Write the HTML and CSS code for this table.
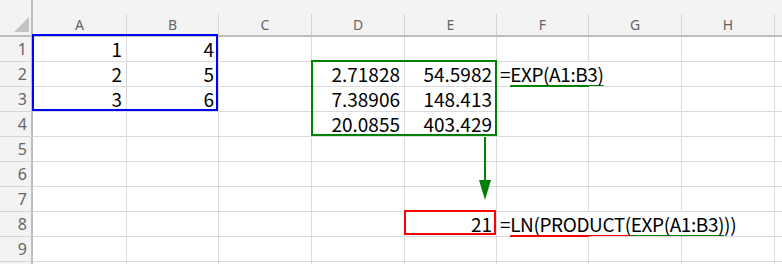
FILE: index.html
```html
<!DOCTYPE html>
<html lang="ja">
<head>
    <meta charset="UTF-8">
    <meta name="viewport" content="width=device-width, initial-scale=1.0">
    <title>EXP / LN</title>
    <link rel="stylesheet" href="styles.css">
</head>
<body>
    <div class="sheet">
        <div class="grid">
            <!-- column headers -->
            <div class="corner"><span class="select-all"></span></div>
            <div class="col-head"><span>A</span></div>
            <div class="col-head"><span>B</span></div>
            <div class="col-head"><span>C</span></div>
            <div class="col-head"><span>D</span></div>
            <div class="col-head"><span>E</span></div>
            <div class="col-head"><span>F</span></div>
            <div class="col-head"><span>G</span></div>
            <div class="col-head"><span>H</span></div>
            <div class="col-head"><span></span></div>

            <div class="row">
                <div class="rh">1</div>
                <div class="c num">1</div>
                <div class="c num">4</div>
                <div class="c"></div>
                <div class="c"></div>
                <div class="c"></div>
                <div class="c"></div>
                <div class="c"></div>
                <div class="c"></div>
                <div class="c"></div>
            </div>
            <div class="row">
                <div class="rh">2</div>
                <div class="c num">2</div>
                <div class="c num">5</div>
                <div class="c"></div>
                <div class="c num">2.71828</div>
                <div class="c num">54.5982</div>
                <div class="c formula spill">=<span class="u-green">EXP(A1:B3)</span></div>
                <div class="c"></div>
                <div class="c"></div>
                <div class="c"></div>
            </div>
            <div class="row">
                <div class="rh">3</div>
                <div class="c num">3</div>
                <div class="c num">6</div>
                <div class="c"></div>
                <div class="c num">7.38906</div>
                <div class="c num">148.413</div>
                <div class="c"></div>
                <div class="c"></div>
                <div class="c"></div>
                <div class="c"></div>
            </div>
            <div class="row">
                <div class="rh">4</div>
                <div class="c"></div>
                <div class="c"></div>
                <div class="c"></div>
                <div class="c num">20.0855</div>
                <div class="c num">403.429</div>
                <div class="c"></div>
                <div class="c"></div>
                <div class="c"></div>
                <div class="c"></div>
            </div>
            <div class="row">
                <div class="rh">5</div>
                <div class="c"></div><div class="c"></div><div class="c"></div>
                <div class="c"></div><div class="c"></div><div class="c"></div>
                <div class="c"></div><div class="c"></div><div class="c"></div>
            </div>
            <div class="row">
                <div class="rh">6</div>
                <div class="c"></div><div class="c"></div><div class="c"></div>
                <div class="c"></div><div class="c"></div><div class="c"></div>
                <div class="c"></div><div class="c"></div><div class="c"></div>
            </div>
            <div class="row">
                <div class="rh">7</div>
                <div class="c"></div><div class="c"></div><div class="c"></div>
                <div class="c"></div><div class="c"></div><div class="c"></div>
                <div class="c"></div><div class="c"></div><div class="c"></div>
            </div>
            <div class="row">
                <div class="rh">8</div>
                <div class="c"></div>
                <div class="c"></div>
                <div class="c"></div>
                <div class="c"></div>
                <div class="c num">21</div>
                <div class="c formula spill">=<span class="u-red">LN(PRODUCT(</span><span class="u-green">EXP(A1:B3)</span>))</div>
                <div class="c spill"></div>
                <div class="c"></div>
                <div class="c"></div>
            </div>
            <div class="row">
                <div class="rh">9</div>
                <div class="c"></div><div class="c"></div><div class="c"></div>
                <div class="c"></div><div class="c"></div><div class="c"></div>
                <div class="c"></div><div class="c"></div><div class="c"></div>
            </div>
            <div class="row">
                <div class="rh"></div>
                <div class="c"></div><div class="c"></div><div class="c"></div>
                <div class="c"></div><div class="c"></div><div class="c"></div>
                <div class="c"></div><div class="c"></div><div class="c"></div>
            </div>
        </div>

        <!-- range outlines drawn over the cells -->
        <div class="range range-blue"></div>
        <div class="range range-green"></div>
        <div class="range range-red"></div>

        <svg class="arrow" width="16" height="66" viewBox="0 0 16 66">
            <line x1="7" y1="1" x2="7" y2="46" stroke="#008000" stroke-width="2"/>
            <polygon points="1,44 13,44 7,64" fill="#008000"/>
        </svg>
    </div>
</body>
</html>
```

FILE: styles.css
```css
* {
    box-sizing: border-box;
}
body {
    margin: 0;
    background-color: #fff;
    font-family: "Noto Sans CJK JP", sans-serif;
    overflow: hidden;
}
.sheet {
    position: relative;
    width: 782px;
    height: 264px;
    overflow: hidden;
}
.grid {
    display: grid;
    grid-template-columns: 33px 94px 92px 93px 93px 92px 92px 93px 93px 1fr;
    grid-template-rows: 37px;
    grid-auto-rows: 25px;
}
.row {
    display: contents;
}
.corner {
    display: flex;
    justify-content: flex-end;
    align-items: flex-end;
    padding: 0 2px 3px 0;
    background-color: #f3f3f3;
    border-right: 2px solid #bdbdbd;
    border-bottom: 2px solid #bdbdbd;
}
.select-all {
    width: 0;
    height: 0;
    border-left: 15px solid transparent;
    border-bottom: 15px solid #c2c2c2;
}
.col-head {
    padding-top: 14px;
    background-color: #f3f3f3;
    border-bottom: 2px solid #bdbdbd;
}
.col-head span {
    display: flex;
    height: 100%;
    align-items: center;
    justify-content: center;
    border-right: 1px solid #d5d5d5;
    font-family: "Noto Sans", sans-serif;
    font-size: 14px;
    color: #666;
}
.rh {
    display: flex;
    align-items: center;
    justify-content: flex-end;
    padding-right: 4px;
    background-color: #f3f3f3;
    border-right: 2px solid #bdbdbd;
    border-bottom: 1px solid #d5d5d5;
    font-family: "Noto Sans", sans-serif;
    font-size: 16px;
    color: #666;
}
.c {
    display: flex;
    align-items: center;
    padding: 0 4px;
    border-right: 1px solid #dadada;
    border-bottom: 1px solid #dadada;
    white-space: nowrap;
    font-size: 19px;
    line-height: 24px;
    color: #000;
}
.num {
    justify-content: flex-end;
}
.formula {
    padding-left: 3px;
    letter-spacing: -0.4px;
}
.spill {
    overflow: visible;
    border-right-color: transparent;
}
.u-green,
.u-red {
    text-decoration: underline;
    text-decoration-thickness: 2px;
    text-underline-offset: 3px;
    text-decoration-skip-ink: none;
}
.u-green {
    text-decoration-color: #008000;
}
.u-red {
    text-decoration-color: #f00;
}
.range {
    position: absolute;
    border: 2px solid;
}
.range-blue {
    left: 32px;
    top: 34px;
    width: 186px;
    height: 77px;
    border-color: #00f;
}
.range-green {
    left: 311px;
    top: 60px;
    width: 186px;
    height: 76px;
    border-color: #008000;
}
.range-red {
    left: 404px;
    top: 210px;
    width: 92px;
    height: 25px;
    border-color: #f00;
}
.arrow {
    position: absolute;
    left: 478px;
    top: 136px;
}
```
